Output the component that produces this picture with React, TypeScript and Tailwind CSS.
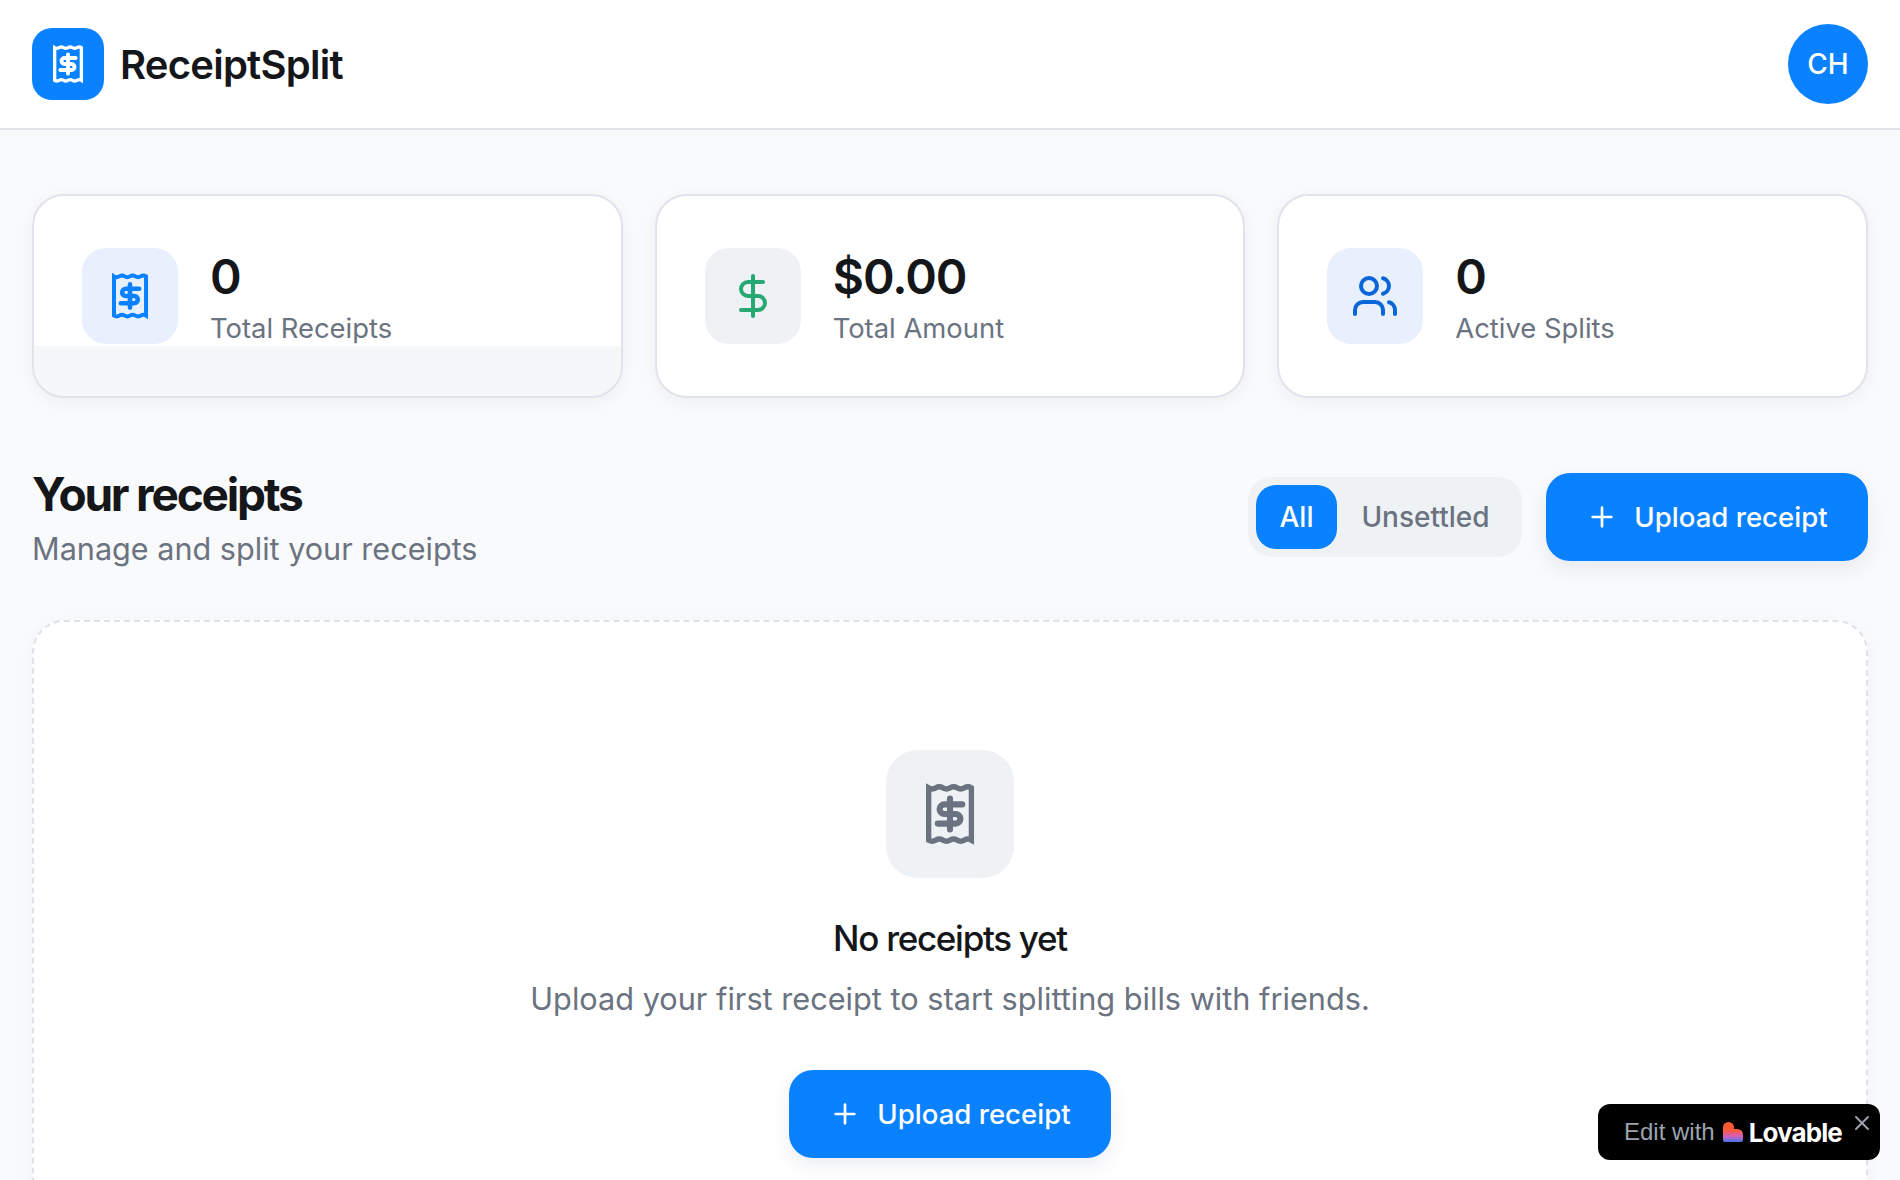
import React from "react";
import { DollarSign, Plus, Users, X } from "lucide-react";

const ReceiptIcon = ({ size, className }: { size: number; className: string }) => (
	<svg
		width={size}
		height={size}
		viewBox="0 0 24 24"
		fill="none"
		stroke="currentColor"
		strokeWidth={2}
		className={className}
	>
		<path
			d="M4 2.2q1.33 .8 2.67 0t2.67 0t2.67 0t2.67 0t2.67 0t2.67 0V21.8q-1.33 -.8 -2.67 0t-2.67 0t-2.67 0t-2.67 0t-2.67 0t-2.67 0Z"
			strokeLinejoin="miter"
		/>
		<path
			d="M16.6 8.4H9.9a1.8 1.8 0 0 0 0 3.6h4.2a1.8 1.8 0 0 1 0 3.6H7.4M12 6.2V17.8"
			strokeWidth={2.3}
			strokeLinecap="round"
			strokeLinejoin="round"
		/>
	</svg>
);

const UploadButton = () => (
	<button className="flex h-[88px] w-[322px] items-center justify-center gap-4 rounded-3xl bg-[#0a81ff] text-[27.6px] leading-10 font-medium text-white shadow-[0_8px_20px_rgba(10,40,90,0.08)]">
		<Plus size={32} strokeWidth={2} />
		Upload receipt
	</button>
);

const stats = [
	{
		id: 1,
		value: "0",
		label: "Total Receipts",
		iconBox: "bg-[#e8f0fd]",
		icon: <ReceiptIcon size={48} className="text-[#0a81ff]" />,
		card: "bg-[linear-gradient(#ffffff_150px,#f6f7f9_150px)]",
	},
	{
		id: 2,
		value: "$0.00",
		label: "Total Amount",
		iconBox: "bg-[#eff2f5]",
		icon: <DollarSign size={48} strokeWidth={2} className="text-[#25a871]" />,
		card: "bg-white",
	},
	{
		id: 3,
		value: "0",
		label: "Active Splits",
		iconBox: "bg-[#e8f0fd]",
		icon: <Users size={48} strokeWidth={2} className="text-[#0a66d8]" />,
		card: "bg-white",
	},
];

export default function App() {
	return (
		<div className="relative h-screen overflow-hidden bg-[#f9fafc] font-['Inter',sans-serif] text-[#14161a]">
			<header className="flex h-[130px] items-center justify-between border-b-2 border-[#dfe3ea] bg-white px-8">
				<div className="flex items-center gap-4">
					<div className="flex h-[72px] w-[72px] items-center justify-center rounded-[20px] bg-[#0a81ff]">
						<ReceiptIcon size={40} className="text-white" />
					</div>
					<span className="pt-0.5 text-[40px] leading-[56px] font-semibold tracking-[-0.75px]">
						ReceiptSplit
					</span>
				</div>
				<div className="flex h-20 w-20 items-center justify-center rounded-full bg-[#0a81ff] text-[28px] font-medium text-white">
					CH
				</div>
			</header>

			<main className="px-8 pt-16">
				<div className="grid grid-cols-3 gap-8">
					{stats.map((stat) => (
						<div
							key={stat.id}
							className={`flex items-center gap-8 rounded-[32px] border-2 border-[#e0e3eb] p-12 shadow-[0_4px_16px_rgba(20,30,60,0.05)] ${stat.card}`}
						>
							<div
								className={`flex h-24 w-24 items-center justify-center rounded-3xl ${stat.iconBox}`}
							>
								{stat.icon}
							</div>
							<div>
								<div className="pt-0.5 text-[48px] leading-[62px] font-semibold tracking-[-1px]">
									{stat.value}
								</div>
								<div className="pt-px text-[27.4px] leading-[39px] text-[#6b7280]">
									{stat.label}
								</div>
							</div>
						</div>
					))}
				</div>

				<div className="mt-16 flex items-center justify-between">
					<div>
						<h2 className="pt-px text-[46px] leading-[62px] font-bold tracking-[-2.2px]">
							Your receipts
						</h2>
						<p className="text-[30.6px] leading-[47px] text-[#6b7280]">
							Manage and split your receipts
						</p>
					</div>
					<div className="flex items-center gap-6">
						<div className="flex h-20 w-[274px] items-center rounded-3xl bg-[#eff2f5] p-2">
							<div className="flex h-16 w-[81px] items-center justify-center rounded-[20px] bg-[#0a81ff] text-[28px] font-medium text-white">
								All
							</div>
							<div className="flex h-16 flex-1 items-center justify-center text-[28px] font-medium text-[#6b7280]">
								Unsettled
							</div>
						</div>
						<UploadButton />
					</div>
				</div>

				<div className="mt-12 flex flex-col items-center rounded-[32px] border-2 border-dashed border-[#dfe2ea] bg-white pt-[128px] pb-32 shadow-[0_4px_16px_rgba(20,30,60,0.04)]">
					<div className="flex h-32 w-32 items-center justify-center rounded-[32px] bg-[#eff2f5]">
						<ReceiptIcon size={64} className="text-[#6b7280]" />
					</div>
					<h3 className="mt-8 text-[35px] leading-14 font-medium tracking-[-1.3px]">
						No receipts yet
					</h3>
					<p className="mt-[9px] text-[30.7px] leading-12 text-[#6b7280]">
						Upload your first receipt to start splitting bills with friends.
					</p>
					<div className="mt-[47px]">
						<UploadButton />
					</div>
				</div>
			</main>

			<div className="absolute right-5 bottom-5 flex h-14 w-[282px] items-center rounded-xl bg-black pl-[26px]">
				<span className="font-['Liberation_Sans',sans-serif] text-[24px] text-[#9ca3af]">
					Edit with
				</span>
				<svg width="20" height="20" viewBox="0 0 20 20" className="ml-2">
					<defs>
						<linearGradient id="lovableGrad" x1="0" y1="0" x2="0" y2="1">
							<stop offset="0.4" stopColor="#ff5a36" />
							<stop offset="0.72" stopColor="#d35fc0" />
							<stop offset="1" stopColor="#3b78e8" />
						</linearGradient>
					</defs>
					<path
						d="M5.5 0a5.5 5.5 0 0 1 5.5 5.5V7h3.5a5.5 5.5 0 0 1 5.5 5.5V18a2 2 0 0 1-2 2H2a2 2 0 0 1-2-2V5.5A5.5 5.5 0 0 1 5.5 0Z"
						fill="url(#lovableGrad)"
					/>
				</svg>
				<span className="ml-1.5 text-[26px] font-bold tracking-[-0.9px] text-white">
					Lovable
				</span>
				<X
					size={24}
					strokeWidth={2}
					className="absolute top-[7px] right-[6px] text-[#9ca3af]"
				/>
			</div>
		</div>
	);
}
